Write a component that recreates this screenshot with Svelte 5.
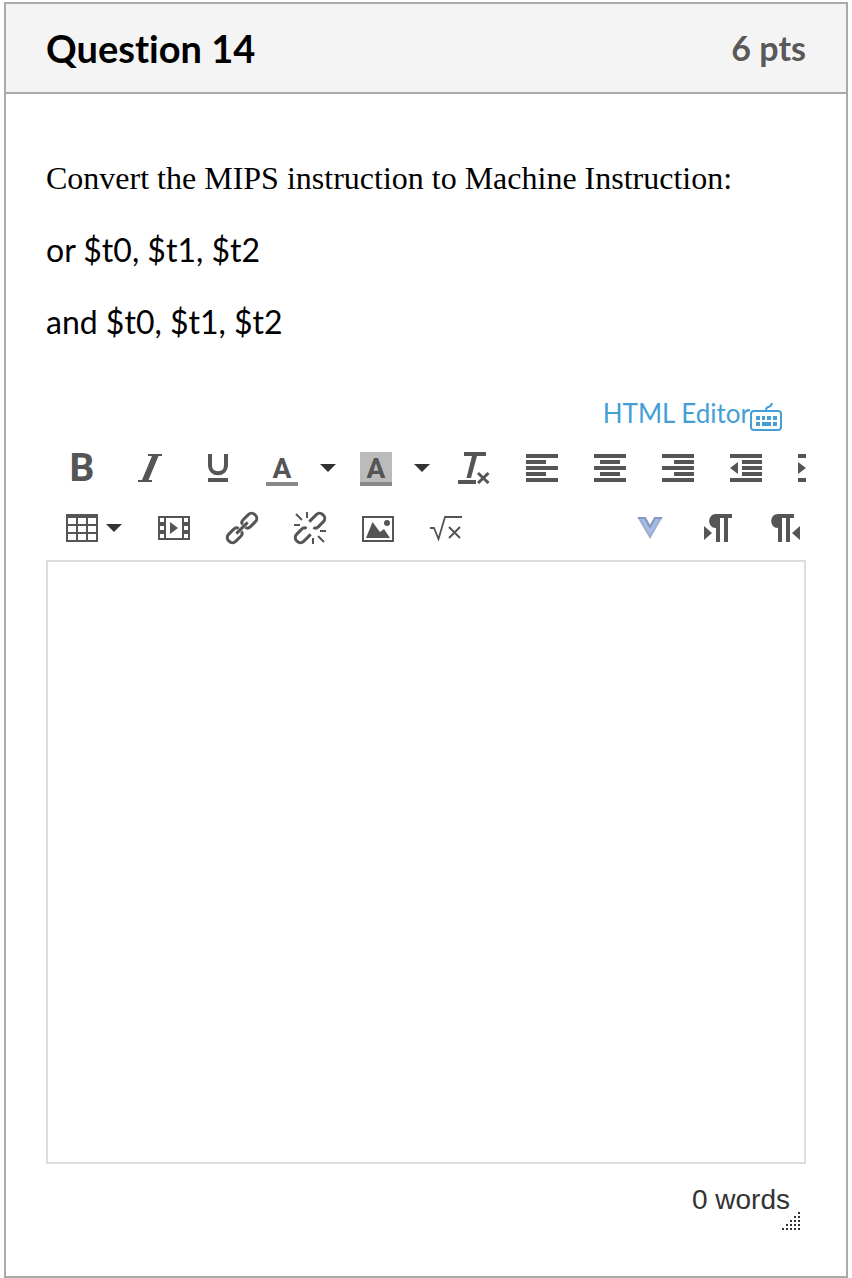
<script>
  let answer = $state('');
  let words = $derived(answer.trim() ? answer.trim().split(/\s+/).length : 0);
</script>

{#snippet bars(rows)}
  <svg class="icon" viewBox="0 0 32 32" aria-hidden="true">
    {#each rows as [x, y, w]}
      <rect {x} {y} width={w} height="4" />
    {/each}
  </svg>
{/snippet}

{#snippet caret()}
  <svg class="caret" viewBox="0 0 16 8" aria-hidden="true"><path d="M0 0H16L8 8Z" /></svg>
{/snippet}

<main class="question">
  <header>
    <h1>Question 14</h1>
    <span class="points">6 pts</span>
  </header>

  <div class="body">
    <div class="prompt">
      <p class="serif">Convert the MIPS instruction to Machine Instruction:</p>
      <p>or $t0, $t1, $t2</p>
      <p>and $t0, $t1, $t2</p>
    </div>

    <div class="links">
      <a href="#html">HTML Editor</a>
      <a class="keys" href="#shortcuts" aria-label="Keyboard shortcuts">
        <svg viewBox="0 0 32 30" aria-hidden="true">
          <rect x="1" y="9" width="30" height="19" rx="3" fill="none" stroke="currentColor" stroke-width="2" />
          <path d="M16 8C16 3 21 7 22 1" fill="none" stroke="currentColor" stroke-width="2" />
          <path d="M6 14h4v4H6zM12 14h3v4h-3zM17 14h4v4h-4zM23 14h4v4h-4zM6 20h4v4H6zM12 20h9v4h-9zM23 20h4v4h-4z" fill="currentColor" />
        </svg>
      </a>
    </div>

    <div class="toolbar" role="toolbar" aria-label="Formatting">
      <div class="row">
        <button aria-label="Bold"><span class="glyph">B</span></button>
        <button aria-label="Italic">
          <svg class="icon" viewBox="0 0 32 32"><path d="M14 2H28V4H24.500L14.500 28H18V30H4V28H8L18 4H14Z" /></svg>
        </button>
        <button aria-label="Underline">
          <svg class="icon" viewBox="0 0 32 32">
            <path d="M8 2V13C8 24 24 24 24 13V2" fill="none" stroke="#555" stroke-width="4" />
            <rect x="6" y="26" width="20" height="4" />
          </svg>
        </button>
        <button class="split" aria-label="Text color"><span class="swatch">A</span>{@render caret()}</button>
        <button class="split" aria-label="Background color"><span class="swatch filled">A</span>{@render caret()}</button>
        <button aria-label="Clear formatting">
          <svg class="icon" viewBox="0 0 32 32">
            <path d="M6 0H28V4H19L13 26H8.500L14 4H6ZM0 28H18V32H0Z" />
            <path d="M20 21L30.500 31M30.500 21L20 31" stroke="#555" stroke-width="3" />
          </svg>
        </button>
        <button aria-label="Align left">{@render bars([[0, 2, 32], [0, 8, 20], [0, 14, 32], [0, 20, 20], [0, 26, 32]])}</button>
        <button aria-label="Align center">{@render bars([[0, 2, 32], [6, 8, 20], [0, 14, 32], [6, 20, 20], [0, 26, 32]])}</button>
        <button aria-label="Align right">{@render bars([[0, 2, 32], [12, 8, 20], [0, 14, 32], [12, 20, 20], [0, 26, 32]])}</button>
        <button aria-label="Decrease indent">
          <svg class="icon" viewBox="0 0 32 32"><path d="M0 2H32V6H0ZM12 8H32V12H12ZM12 14H32V18H12ZM12 20H32V24H12ZM0 26H32V30H0ZM8 10V22L0 16Z" /></svg>
        </button>
        <button aria-label="Increase indent">
          <svg class="icon" viewBox="0 0 32 32"><path d="M0 2H32V6H0ZM12 8H32V12H12ZM12 14H32V18H12ZM12 20H32V24H12ZM0 26H32V30H0ZM0 10V22L8 16Z" /></svg>
        </button>
      </div>

      <div class="row">
        <button class="menu" aria-label="Table">
          <svg class="icon" viewBox="0 0 32 32"><path fill-rule="evenodd" d="M0 2H32V30H0ZM2 6V12H10V6ZM12 6V12H20V6ZM22 6V12H30V6ZM2 14V20H10V14ZM12 14V20H20V14ZM22 14V20H30V14ZM2 22V28H10V22ZM12 22V28H20V22ZM22 22V28H30V22Z" /></svg>
          {@render caret()}
        </button>
        <button aria-label="Media">
          <svg class="icon" viewBox="0 0 32 32"><path fill-rule="evenodd" d="M0 4H32V28H0ZM2 6V10H6V6ZM2 14V18H6V14ZM2 22V26H6V22ZM26 6V10H30V6ZM26 14V18H30V14ZM26 22V26H30V22ZM8 6V26H24V6ZM12 10L20 16L12 22Z" /></svg>
        </button>
        <button aria-label="Link">
          <svg class="icon line" viewBox="0 0 32 32">
            <g transform="rotate(-45 16 16)">
              <path d="M13 18C13 20 11 21 9 21H2a4.500 4.500 0 0 1-4.500-4.500v-1a4.500 4.500 0 0 1 4.500-4.500H9C11 11 13 12 13 14M19 14C19 12 21 11 23 11H30a4.500 4.500 0 0 1 4.500 4.500v1a4.500 4.500 0 0 1-4.500 4.500H23C21 21 19 20 19 18M8 16H24" />
            </g>
          </svg>
        </button>
        <button aria-label="Remove link">
          <svg class="icon line" viewBox="0 0 32 32">
            <g transform="rotate(-45 16 16)">
              <path d="M12 21H2a4.500 4.500 0 0 1-4.500-4.500v-1a4.500 4.500 0 0 1 4.500-4.500H9C11 11 13 12 13 14M20 11H30a4.500 4.500 0 0 1 4.500 4.500v1a4.500 4.500 0 0 1-4.500 4.500H23C21 21 19 20 19 18" />
            </g>
            <path d="M2 2L8 8M13 0V6M0 13H6M24 24L30 30M19 26V32M26 19H32" stroke-width="2" />
          </svg>
        </button>
        <button aria-label="Image">
          <svg class="icon" viewBox="0 0 32 32">
            <path fill-rule="evenodd" d="M0 4H32V30H0ZM2 6V28H30V6Z" />
            <path d="M4 26L10.500 10L18 20L22 17L28 26Z" /><circle cx="25" cy="11" r="3" />
          </svg>
        </button>
        <button aria-label="Equation">
          <svg class="icon" viewBox="0 0 32 32">
            <path d="M0 16H4L8.500 27L15 5H32" fill="none" stroke="#555" stroke-width="1.800" />
            <path d="M19 15L30 26M30 15L19 26" stroke="#555" stroke-width="2" />
          </svg>
        </button>
        <button class="later" aria-label="More tools">
          <svg class="icon" viewBox="0 0 32 32">
            <path d="M5 6H11L16 15L21 6H27L16 25Z" fill="#a5bce6" stroke="#9dadcf" stroke-width="2" />
            <path d="M4 6H11L16 15L21 6H28" fill="none" stroke="#8798bf" stroke-width="2" />
          </svg>
        </button>
        <button aria-label="Left to right">
          <svg class="icon" viewBox="0 0 32 32"><path d="M14 2H30V6H26V30H22V6H18V30H14V16C5 16 5 2 14 2ZM2 14V28L10 21Z" /></svg>
        </button>
        <button aria-label="Right to left">
          <svg class="icon" viewBox="0 0 32 32"><path d="M8 2H24V6H20V30H16V6H12V30H8V16C-1 16-1 2 8 2ZM30 14V28L22 21Z" /></svg>
        </button>
      </div>
    </div>

    <textarea aria-label="Answer" bind:value={answer}></textarea>

    <footer>
      <span>{words} words</span>
      <svg class="grip" viewBox="0 0 18 18" aria-hidden="true">
        {#each [0, 1, 2, 3, 4] as r}
          {#each [0, 1, 2, 3, 4] as c}
            {#if r + c >= 4}<rect x={c * 4} y={r * 4} width="2" height="2" />{/if}
          {/each}
        {/each}
      </svg>
    </footer>
  </div>
</main>

<style>
  :global(body) {
    background: #fff;
  }
  .question {
    margin: 2px 4px 0;
    border: 2px solid #aaa;
    font-family: Lato, sans-serif;
    font-variant-ligatures: none;
    color: #000;
  }
  header {
    display: flex;
    justify-content: space-between;
    align-items: center;
    height: 88px;
    padding: 0 40px;
    background: #f4f4f4;
    border-bottom: 2px solid #aaa;
  }
  h1 {
    margin: 0;
    font-size: 38px;
    line-height: 48px;
    font-weight: 700;
  }
  .points {
    font-size: 34px;
    line-height: 48px;
    font-weight: 700;
    color: #595959;
  }
  .body {
    padding: 60px 40px 46px;
  }
  p {
    margin: 0 0 24px;
    font-size: 32px;
    line-height: 48px;
  }
  .serif {
    font-family: "Liberation Serif", serif;
  }
  .links {
    display: flex;
    justify-content: flex-end;
    align-items: flex-end;
    height: 38px;
    margin-top: 48px;
    padding-right: 24px;
    font-size: 26px;
    line-height: 38px;
  }
  .links a {
    color: #459fd6;
    text-decoration: none;
  }
  .keys,
  .keys svg {
    display: block;
    width: 32px;
    height: 30px;
  }
  .toolbar {
    overflow: hidden;
    padding: 6px 0 2px 2px;
  }
  .row {
    display: flex;
    height: 60px;
  }
  button {
    display: flex;
    flex: none;
    align-items: center;
    margin: 0;
    padding: 0 18px;
    border: 0;
    background: none;
    color: #555;
  }
  .split {
    gap: 22px;
    padding: 0 10px 0 14px;
  }
  .menu {
    gap: 8px;
  }
  .later {
    margin-left: 136px;
  }
  .icon {
    display: block;
    width: 32px;
    height: 32px;
    fill: #555;
  }
  .line {
    overflow: visible;
    fill: none;
    stroke: #555;
    stroke-width: 3;
  }
  .caret {
    width: 16px;
    height: 8px;
    fill: #333;
  }
  .glyph,
  .swatch {
    width: 32px;
    font-family: Roboto, sans-serif;
    font-weight: 700;
    text-align: center;
  }
  .glyph {
    font-size: 39px;
    line-height: 32px;
  }
  .swatch {
    margin-top: 2px;
    padding-top: 4px;
    border-bottom: 4px solid #888;
    font-size: 28px;
    line-height: 26px;
  }
  .filled {
    background: #bbb;
  }
  textarea {
    display: block;
    box-sizing: border-box;
    width: 100%;
    height: 604px;
    padding: 16px;
    border: 2px solid #ddd;
    border-radius: 0;
    outline: 0;
    resize: none;
    font: 32px/48px Lato, sans-serif;
  }
  footer {
    display: flex;
    flex-direction: column;
    align-items: flex-end;
    padding: 24px 6px 0 0;
    font-family: "Liberation Sans", sans-serif;
    font-size: 28px;
    line-height: 24px;
    color: #333;
  }
  footer span {
    padding-right: 10px;
  }
  .grip {
    width: 18px;
    height: 18px;
    fill: #333;
  }
</style>
